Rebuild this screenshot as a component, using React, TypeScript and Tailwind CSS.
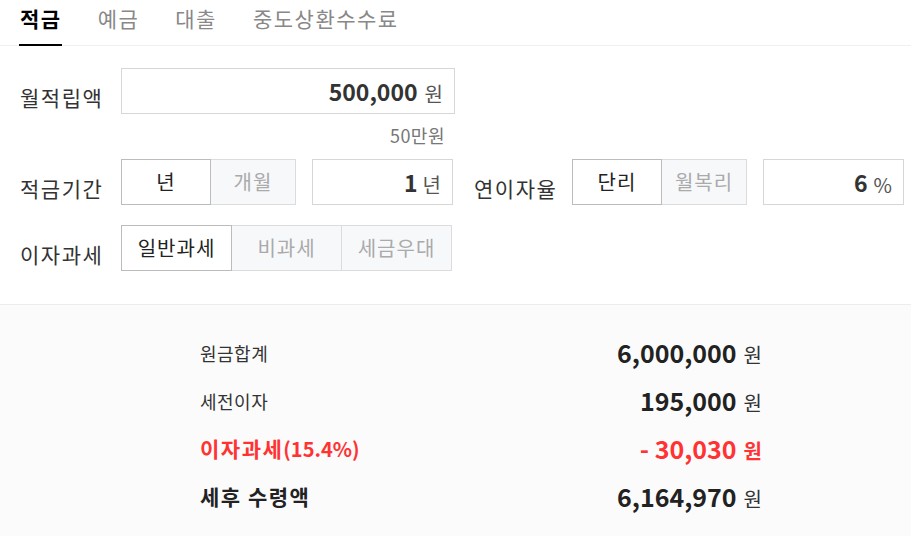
import React from "react";

const F = { fontFamily: '"Noto Sans CJK KR", "Noto Sans", sans-serif' };

function Seg({ items, active, widths }: { items: string[]; active: number; widths: number[] }) {
  return (
    <div className="flex h-[46px]">
      {items.map((t, i) => (
        <div
          key={t}
          style={{ width: widths[i] }}
          className={
            "flex items-center justify-center text-[20px] tracking-[1px] border " +
            (i === active
              ? "bg-white border-[#bcbcbc] text-[#222] z-10"
              : "bg-[#f7f8fa] border-[#dcdcdc] text-[#aaa]") +
            (i > 0 ? " -ml-px" : "")
          }
        >
          {t}
        </div>
      ))}
    </div>
  );
}

function NumBox({ value, unit, w, unitGap }: { value: string; unit: string; w: number; unitGap: string }) {
  return (
    <div
      style={{ width: w }}
      className="h-[46px] border border-[#d6d6d6] bg-white flex items-center justify-end pr-[11px]"
    >
      <span className="text-[23px] font-bold text-[#333] leading-none">{value}</span>
      <span className={"text-[20px] text-[#555] leading-none mt-[6px] " + unitGap}>{unit}</span>
    </div>
  );
}

function Label({ children, w }: { children: React.ReactNode; w: number }) {
  return (
    <div style={{ width: w }} className="text-[21px] tracking-[1.5px] text-[#333] mt-[14px] shrink-0">
      {children}
    </div>
  );
}

function Val({ v, red }: { v: string; red?: boolean }) {
  return (
    <span className="flex items-baseline">
      <span className={"text-[25px] font-bold " + (red ? "text-[#ff3333]" : "text-[#222]")}>{v}</span>
      <span className={"text-[20px] ml-[7px] " + (red ? "font-bold text-[#ff3333]" : "text-[#333]")}>원</span>
    </span>
  );
}

export default function App() {
  return (
    <div style={F} className="w-[911px] h-[536px] bg-white overflow-hidden flex flex-col">
      {/* Tabs */}
      <div className="flex border-b border-[#f0f0f0] pl-[19px] gap-[35px]">
        <div className="h-[46px] -mb-px border-b-2 border-black pl-px leading-[36px] text-[21px] tracking-[1.5px] font-bold text-black">
          적금
        </div>
        <div className="h-[46px] -mb-px pl-px leading-[36px] text-[21px] tracking-[1.5px] text-[#888]">예금</div>
        <div className="h-[46px] -mb-px pl-px leading-[36px] text-[21px] tracking-[1.5px] text-[#888]">대출</div>
        <div className="h-[46px] -mb-px pl-px leading-[36px] text-[21px] tracking-[1.5px] text-[#888]">
          중도상환수수료
        </div>
      </div>

      {/* Form */}
      <div className="pl-[20px] pt-[22px] pb-[33px] border-b border-[#ededed]">
        <div className="flex items-center">
          <Label w={101}>월적립액</Label>
          <NumBox value="500,000" unit="원" w={334} unitGap="ml-[7px]" />
        </div>
        <div className="w-[435px] flex justify-end pr-[10px] pt-[9px] h-[45px] text-[18px] tracking-[0.5px] text-[#777] leading-[24px]">
          50만원
        </div>
        <div className="flex items-center">
          <Label w={101}>적금기간</Label>
          <Seg items={["년", "개월"]} active={0} widths={[90, 86]} />
          <div className="w-[16px]" />
          <NumBox value="1" unit="년" w={141} unitGap="ml-[5px]" />
          <div className="w-[21px]" />
          <Label w={98}>연이자율</Label>
          <Seg items={["단리", "월복리"]} active={0} widths={[90, 86]} />
          <div className="w-[16px]" />
          <NumBox value="6" unit="%" w={141} unitGap="ml-[6px]" />
        </div>
        <div className="flex items-center mt-[20px]">
          <Label w={101}>이자과세</Label>
          <Seg items={["일반과세", "비과세", "세금우대"]} active={0} widths={[111, 111, 111]} />
        </div>
      </div>

      {/* Results */}
      <div className="flex-1 bg-[#fbfbfb] pt-[24px] pl-[200px]">
        <div className="w-[562px]">
          <div className="h-[48px] flex items-center justify-between">
            <span className="text-[18px] tracking-[0.5px] text-[#333]">원금합계</span>
            <Val v="6,000,000" />
          </div>
          <div className="h-[48px] flex items-center justify-between">
            <span className="text-[18px] tracking-[0.5px] text-[#333]">세전이자</span>
            <Val v="195,000" />
          </div>
          <div className="h-[48px] flex items-center justify-between">
            <span className="font-bold text-[#ff3333] flex items-baseline">
              <span className="text-[21px] tracking-[1.5px]">이자과세</span>
              <span className="text-[20px]">(15.4%)</span>
            </span>
            <Val v="- 30,030" red />
          </div>
          <div className="h-[48px] flex items-center justify-between">
            <span className="text-[21px] tracking-[1.5px] font-bold text-[#222]">세후 수령액</span>
            <Val v="6,164,970" />
          </div>
        </div>
      </div>
    </div>
  );
}
